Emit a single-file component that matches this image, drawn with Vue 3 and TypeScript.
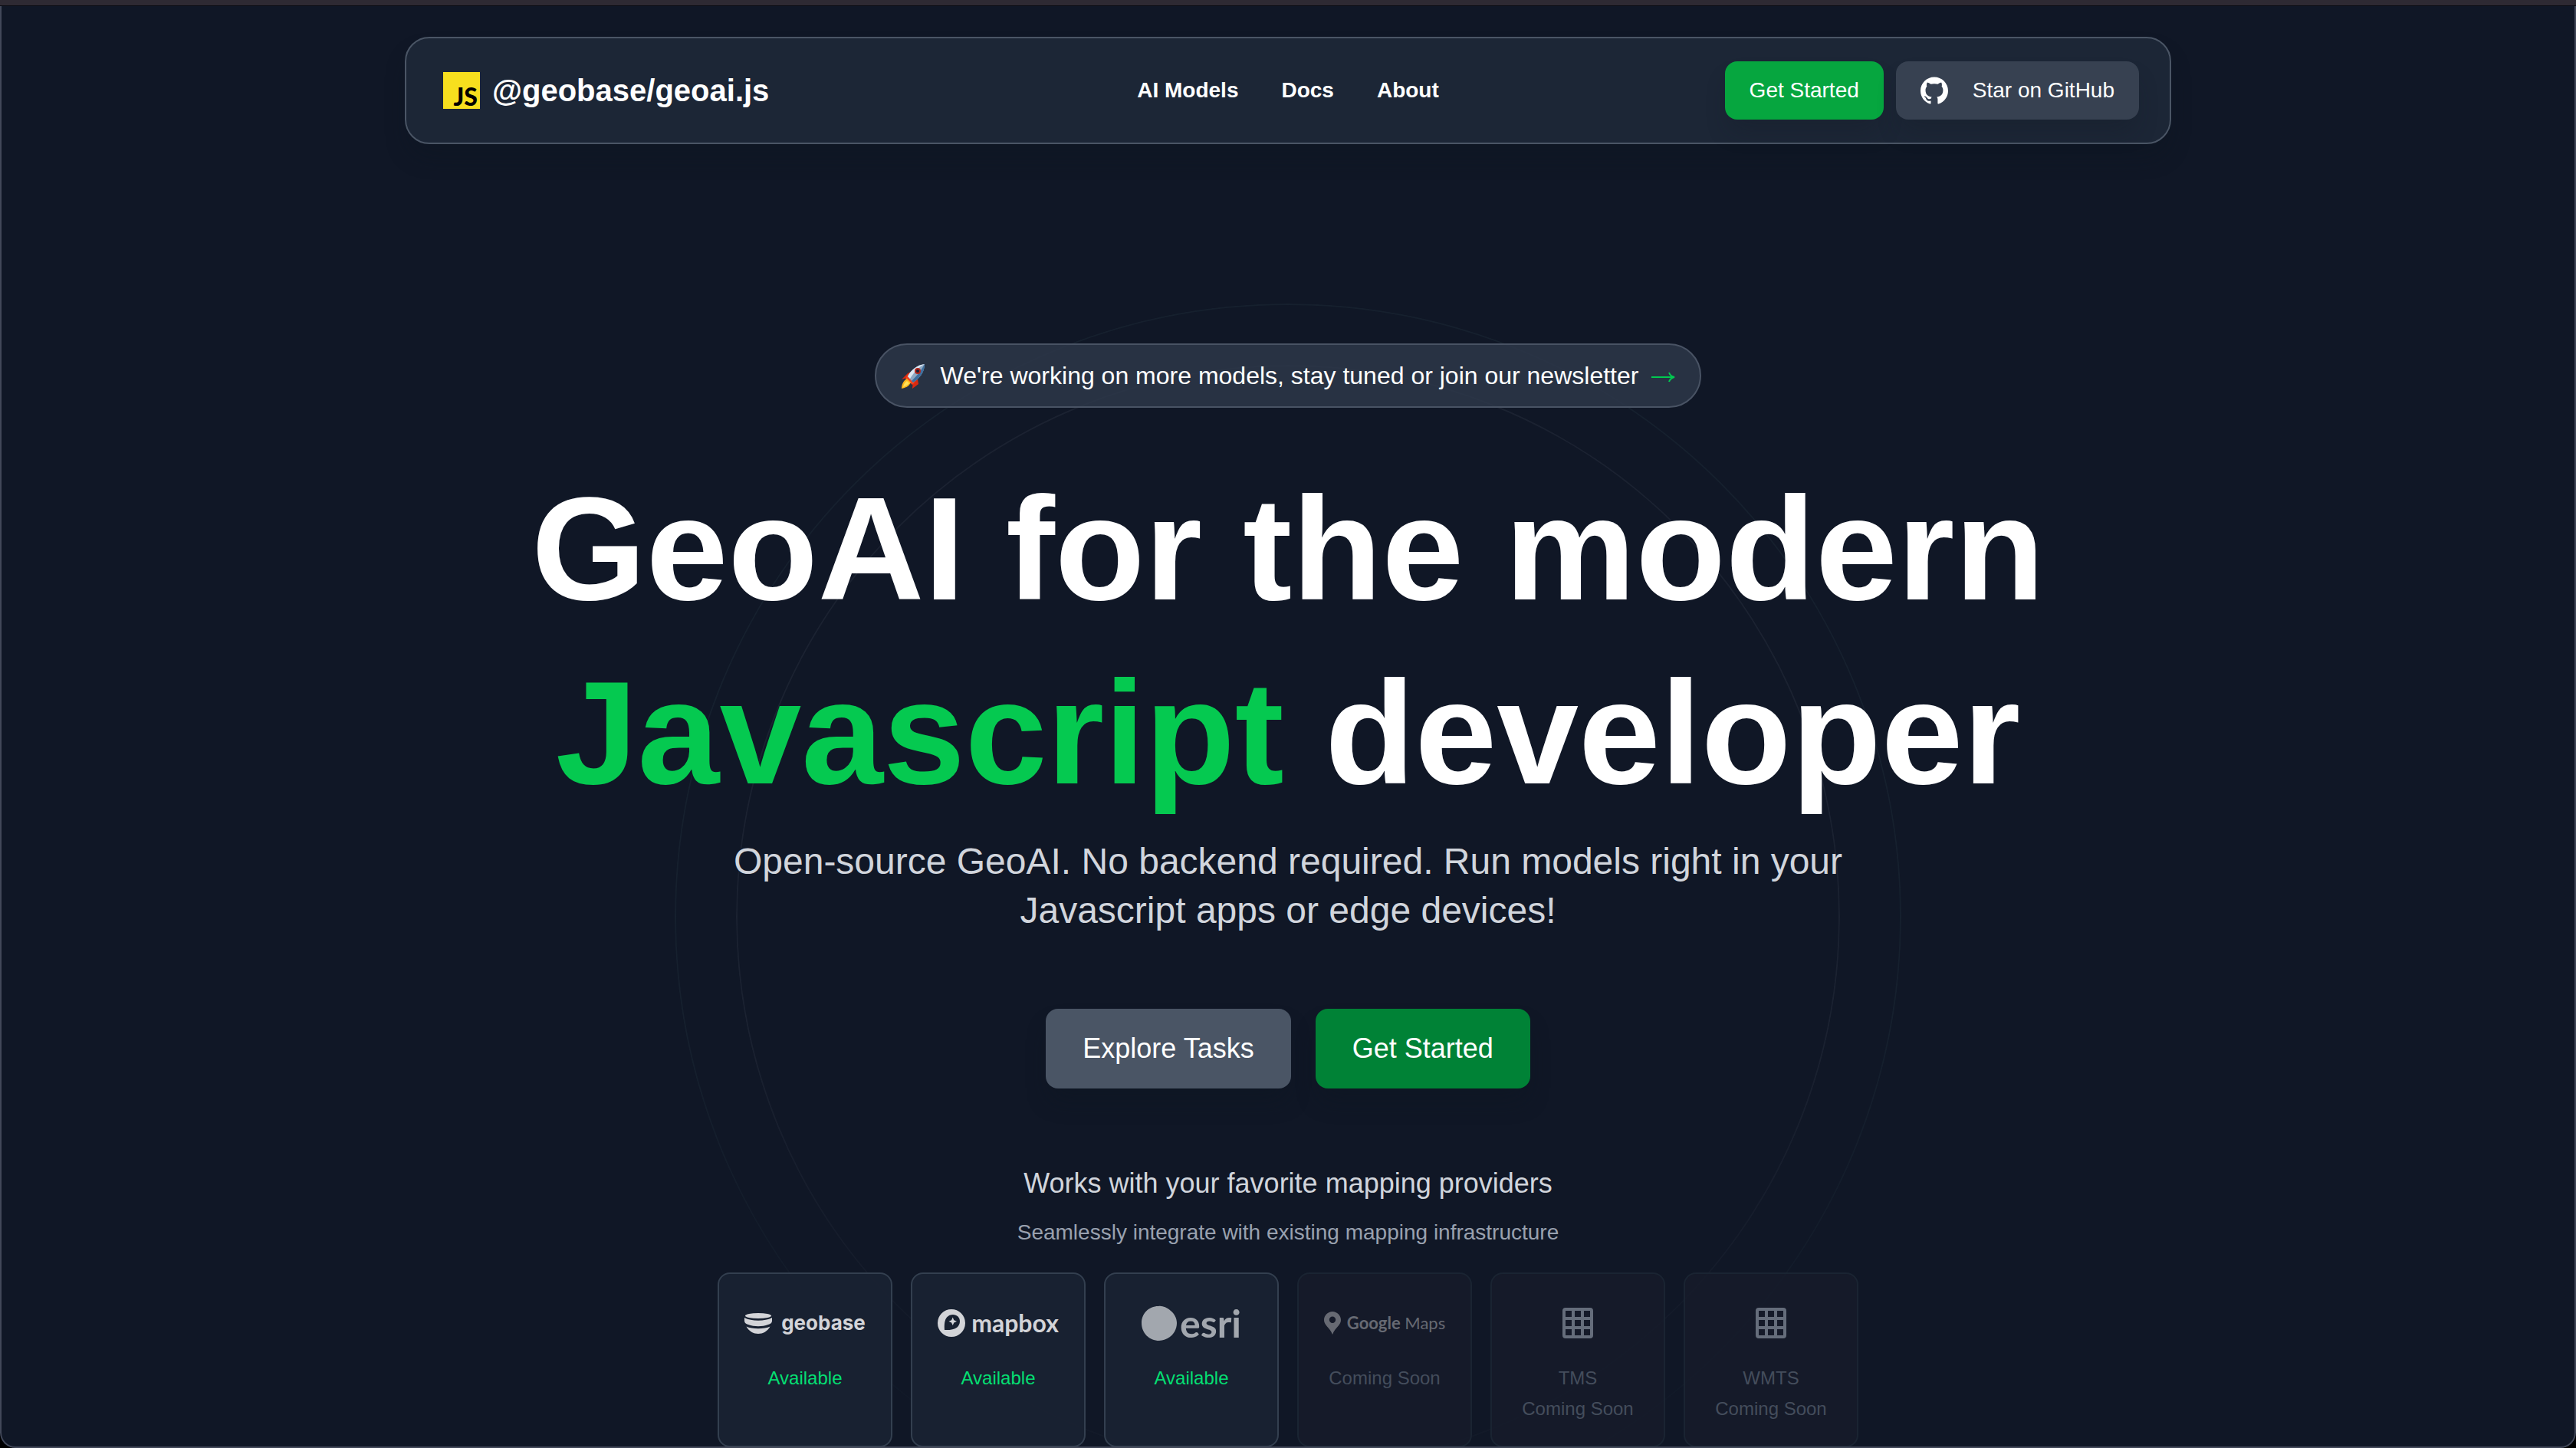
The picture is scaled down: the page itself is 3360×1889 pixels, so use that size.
<script setup lang="ts">
type Brand = 'geobase' | 'mapbox' | 'esri' | 'google' | 'grid'

interface Provider {
  id: string
  brand: Brand
  name?: string
  available: boolean
}

const navLinks: string[] = ['AI Models', 'Docs', 'About']

const providers: Provider[] = [
  { id: 'geobase', brand: 'geobase', available: true },
  { id: 'mapbox', brand: 'mapbox', available: true },
  { id: 'esri', brand: 'esri', available: true },
  { id: 'google', brand: 'google', available: false },
  { id: 'tms', brand: 'grid', name: 'TMS', available: false },
  { id: 'wmts', brand: 'grid', name: 'WMTS', available: false },
]
</script>

<template>
  <div class="window">
    <div class="window-strip"></div>
    <div class="page">
      <header class="navbar">
        <a class="brand" href="#">
          <span class="js-mark">JS</span>
          <span class="brand-name">@geobase/geoai.js</span>
        </a>
        <nav class="links">
          <a v-for="link in navLinks" :key="link" href="#">{{ link }}</a>
        </nav>
        <div class="nav-actions">
          <button class="nav-btn nav-btn-primary" type="button">Get Started</button>
          <a class="nav-btn nav-btn-github" href="#">
            <svg class="github-icon" viewBox="0 0 24 24" aria-hidden="true">
              <path
                fill="currentColor"
                d="M12 .297c-6.63 0-12 5.373-12 12 0 5.303 3.438 9.8 8.205 11.385.6.113.82-.258.82-.577 0-.285-.01-1.04-.015-2.04-3.338.724-4.042-1.61-4.042-1.61C4.422 18.07 3.633 17.7 3.633 17.7c-1.087-.744.084-.729.084-.729 1.205.084 1.838 1.236 1.838 1.236 1.07 1.835 2.809 1.305 3.495.998.108-.776.417-1.305.76-1.605-2.665-.3-5.466-1.332-5.466-5.93 0-1.31.465-2.38 1.235-3.22-.135-.303-.54-1.523.105-3.176 0 0 1.005-.322 3.3 1.23.96-.267 1.98-.399 3-.405 1.02.006 2.04.138 3 .405 2.28-1.552 3.285-1.23 3.285-1.23.645 1.653.24 2.873.12 3.176.765.84 1.23 1.91 1.23 3.22 0 4.61-2.805 5.625-5.475 5.92.42.36.81 1.096.81 2.22 0 1.606-.015 2.896-.015 3.286 0 .315.21.69.825.57C20.565 22.092 24 17.592 24 12.297c0-6.627-5.373-12-12-12"
              />
            </svg>
            <span>Star on GitHub</span>
          </a>
        </div>
      </header>

      <main class="hero">
        <div class="ring ring-outer"></div>
        <div class="ring ring-inner"></div>

        <a class="announcement" href="#">
          <svg class="rocket" viewBox="0 0 36 36" aria-hidden="true">
            <path fill="#d92a12" d="M9 15 L15 12 L11 20 L1 23 Z" />
            <path fill="#d92a12" d="M22 23 L23 29 L15 35 L16 24 Z" />
            <path fill="#f5411b" d="M9 17 L18 27 L15 30 L6 22 Z" />
            <path fill="#ffb81c" d="M8 22 L13 27 C10 33 5 34 1 35 C1 30 3 25 8 22 Z" />
            <path fill="#ffe25a" d="M8 25 L11 28 C8 31 5 32 3 33 C4 29 5 27 8 25 Z" />
            <path fill="#8fa9c4" d="M31 3 C21 4 13 11 9 19 L16 27 C24 22 31 14 31 3 Z" />
            <path fill="#dbe7f2" d="M31 3 C21 4 13 11 9 19 L12 22 C17 14 23 7 31 3 Z" />
            <path fill="#3d6f9f" d="M31 3 C31 14 24 22 16 27 L14 25 C21 18 27 11 31 3 Z" />
            <circle cx="22" cy="12" r="4" fill="#b3261a" />
            <circle cx="22" cy="12" r="2" fill="#16213a" />
          </svg>
          <span>We're working on more models, stay tuned or join our newsletter</span>
          <svg class="arrow" viewBox="0 0 32 32" aria-hidden="true">
            <path d="M1 18H29" />
            <path d="M24 12C25 15 27 17 31 18C27 19 25 21 24 24" />
          </svg>
        </a>

        <h1 class="headline">
          GeoAI for the modern<br />
          <span class="accent">Javascript</span> developer
        </h1>
        <p class="lead">
          Open-source GeoAI. No backend required. Run models right in your Javascript apps or edge
          devices!
        </p>

        <div class="cta-row">
          <button class="cta cta-neutral" type="button">Explore Tasks</button>
          <button class="cta cta-primary" type="button">Get Started</button>
        </div>

        <h2 class="providers-title">Works with your favorite mapping providers</h2>
        <p class="providers-note">Seamlessly integrate with existing mapping infrastructure</p>

        <ul class="providers">
          <li
            v-for="provider in providers"
            :key="provider.id"
            class="card"
            :class="{ soon: !provider.available }"
          >
            <div class="logo" :class="`logo-${provider.brand}`">
              <template v-if="provider.brand === 'geobase'">
                <svg class="geobase-icon" viewBox="0 0 36 27" aria-hidden="true">
                  <ellipse cx="18" cy="3.5" rx="17" ry="3.5" />
                  <path d="M0 6 C9 11 27 11 36 6 L36 10 C36 13 34 14 31 15 C23 18 13 18 5 15 C2 14 0 13 0 10 Z" />
                  <path d="M2.5 17.5 C10 21 26 21 33.5 17.5 C30 24 24 27 18 27 C12 27 6 24 2.5 17.5 Z" />
                </svg>
                <span>geobase</span>
              </template>
              <template v-else-if="provider.brand === 'mapbox'">
                <svg class="mapbox-icon" viewBox="0 0 36 36" aria-hidden="true">
                  <path
                    fill-rule="evenodd"
                    d="M18 0 A18 18 0 1 1 18 36 A18 18 0 1 1 18 0 Z M9 27 C8.5 20 9 14 12 10.5 C16 6 23 6 26.5 9.5 C30 13 30 19.5 25.5 23.5 C21.5 26.8 15 27.3 9 27 Z"
                  />
                  <path d="M19.7 10.5 L21.3 14.2 L25 15.8 L21.3 17.4 L19.7 21 L18.1 17.4 L14.5 15.8 L18.1 14.2 Z" />
                </svg>
                <span>mapbox</span>
              </template>
              <template v-else-if="provider.brand === 'esri'">
                <svg class="esri-icon" viewBox="0 0 46 46" aria-hidden="true">
                  <path d="M22 1 C27 0 34 3 38 7 C43 11 46 17 46 23 C46 36 35 46 23 46 C10 46 0 36 0 23 C0 11 9 1 22 1 Z" />
                </svg>
                <span>esri</span>
              </template>
              <template v-else-if="provider.brand === 'google'">
                <svg class="pin-icon" viewBox="0 0 22 30" aria-hidden="true">
                  <path
                    fill-rule="evenodd"
                    d="M11 0 C17 0 22 5 22 11 C22 18 15 20 11 30 C7 20 0 18 0 11 C0 5 5 0 11 0 Z M11 6.5 A4.2 4.2 0 1 0 11 14.9 A4.2 4.2 0 1 0 11 6.5 Z"
                  />
                </svg>
                <span><span class="google-word">Google</span> Maps</span>
              </template>
              <svg v-else class="grid-icon" viewBox="0 0 24 24" aria-hidden="true">
                <rect x="3" y="3" width="18" height="18" rx="1" />
                <path d="M3 9H21M3 15H21M9 3V21M15 3V21" />
              </svg>
            </div>
            <div class="status">
              <span v-if="provider.name">{{ provider.name }}</span>
              <span>{{ provider.available ? 'Available' : 'Coming Soon' }}</span>
            </div>
          </li>
        </ul>
      </main>
    </div>
  </div>
</template>

<style>
body {
  background: #000;
}
</style>

<style scoped>
.window,
.window * {
  box-sizing: border-box;
}

.window {
  display: flex;
  flex-direction: column;
  min-height: 100vh;
  font-family: 'Liberation Sans', Arial, sans-serif;
  color: #fff;
}

.window-strip {
  height: 8px;
  background: #2e2a33;
  border-bottom: 1px solid #090b12;
}

.page {
  position: relative;
  flex: 1;
  display: flex;
  flex-direction: column;
  align-items: center;
  padding: 40px 32px 0;
  background: #101726;
  border-radius: 0 0 20px 20px;
  overflow: hidden;
}

.page::after {
  content: '';
  position: absolute;
  inset: 0;
  border: 2px solid #424859;
  border-top: 0;
  border-radius: 0 0 20px 20px;
  pointer-events: none;
}

a {
  color: inherit;
  text-decoration: none;
}

button {
  font: inherit;
  color: inherit;
  border: 0;
  cursor: pointer;
}

.navbar {
  display: grid;
  grid-template-columns: 1fr auto 1fr;
  align-items: center;
  width: 100%;
  max-width: 2304px;
  padding: 30px 40px;
  border: 2px solid #4a5565;
  border-radius: 32px;
  background: #1c2636;
  box-shadow: 0 20px 30px -6px rgba(12, 22, 32, 0.4);
}

.brand {
  display: flex;
  align-items: center;
  gap: 16px;
  padding-left: 8px;
}

.js-mark {
  display: flex;
  align-items: flex-end;
  justify-content: flex-end;
  width: 48px;
  height: 48px;
  padding-right: 3px;
  background: #f7df1e;
  color: #000;
  font: 900 32px/32px Lato, sans-serif;
}

.brand-name {
  font-size: 40px;
  font-weight: 700;
  line-height: 56px;
}

.links {
  display: flex;
  gap: 56px;
  font-size: 28px;
  font-weight: 700;
  line-height: 40px;
}

.nav-actions {
  display: flex;
  justify-content: flex-end;
  gap: 16px;
}

.nav-btn {
  display: flex;
  align-items: center;
  gap: 32px;
  padding: 18px 32px;
  border-radius: 16px;
  font-size: 28px;
  line-height: 40px;
  box-shadow: 0 20px 30px -6px rgba(20, 28, 38, 0.3);
}

.nav-btn-primary {
  background: #06a63f;
}

.nav-btn-github {
  background: #374151;
}

.github-icon {
  width: 36px;
  height: 36px;
}

.hero {
  position: relative;
  display: flex;
  flex-direction: column;
  align-items: center;
  width: 100%;
  padding-top: 260px;
  text-align: center;
}

.ring {
  position: absolute;
  left: 50%;
  transform: translateX(-50%);
  border-radius: 50%;
  mask-image: linear-gradient(#000 60%, rgba(0, 0, 0, 0.3) 90%);
  pointer-events: none;
}

.ring-outer {
  top: 208px;
  width: 1600px;
  height: 1600px;
  border: 2px solid #16202e;
}

.ring-inner {
  top: 288px;
  width: 1440px;
  height: 1440px;
  border: 2px solid #1b2231;
}

.announcement {
  position: relative;
  display: flex;
  align-items: center;
  gap: 16px;
  padding: 16px 32px;
  border: 2px solid #495364;
  border-radius: 42px;
  background: rgba(45, 55, 73, 0.85);
  font-size: 32px;
  line-height: 48px;
}

.rocket {
  width: 36px;
  height: 36px;
}

.arrow {
  width: 32px;
  height: 32px;
  fill: none;
  stroke: #00c950;
  stroke-width: 2;
}

.headline {
  position: relative;
  margin: 64px 0 0;
  font-size: 192px;
  font-weight: 700;
  line-height: 240px;
}

.accent {
  color: #05c950;
}

.lead {
  position: relative;
  max-width: 1536px;
  margin: 16px 0 0;
  color: #d1d5dc;
  font-size: 48px;
  line-height: 64px;
}

.cta-row {
  position: relative;
  display: flex;
  gap: 32px;
  margin-top: 96px;
}

.cta {
  padding: 24px 48px;
  border-radius: 16px;
  font-size: 36px;
  line-height: 56px;
  box-shadow: 0 20px 30px -6px rgba(12, 22, 32, 0.4);
}

.cta-neutral {
  background: #4a5565;
}

.cta-primary {
  background: #008236;
}

.providers-title {
  margin: 96px 0 0;
  color: #d1d5dc;
  font-size: 36px;
  font-weight: 400;
  line-height: 56px;
}

.providers-note {
  margin: 16px 0 0;
  color: #99a1af;
  font-size: 28px;
  line-height: 40px;
}

.providers {
  position: relative;
  display: grid;
  grid-template-columns: repeat(6, 1fr);
  gap: 24px;
  width: 100%;
  max-width: 1488px;
  margin: 32px 0 0;
  padding: 0;
  list-style: none;
}

.card {
  display: flex;
  flex-direction: column;
  align-items: center;
  gap: 20px;
  aspect-ratio: 1;
  padding-top: 32px;
  border: 2px solid #333f4f;
  border-radius: 16px;
  background: rgba(25, 34, 49, 0.95);
}

.card.soon {
  border-color: #1a2432;
  background: rgba(22, 28, 43, 0.8);
}

.logo {
  display: flex;
  align-items: center;
  height: 64px;
  color: #d3d4d8;
  fill: currentColor;
  white-space: nowrap;
}

.logo-geobase {
  gap: 12px;
  font: 700 26px/32px Inter, sans-serif;
}

.logo-mapbox {
  gap: 8px;
  font: 700 32px/32px Lato, sans-serif;
}

.logo-esri {
  gap: 4px;
  color: #a2a7ae;
  font: 700 50px/48px Lato, sans-serif;
}

.logo-google {
  gap: 8px;
  color: #676a73;
  font: 400 22px/32px Lato, sans-serif;
}

.google-word {
  font-weight: 700;
}

.geobase-icon {
  width: 36px;
  height: 27px;
}

.mapbox-icon {
  width: 36px;
  height: 36px;
}

.esri-icon {
  width: 46px;
  height: 46px;
}

.pin-icon {
  width: 22px;
  height: 30px;
}

.grid-icon {
  width: 48px;
  height: 48px;
  fill: none;
  stroke: #656d7b;
  stroke-width: 2;
}

.status {
  display: flex;
  flex-direction: column;
  color: #05df72;
  font-size: 24px;
  line-height: 40px;
}

.soon .status {
  color: #444d5c;
}
</style>
